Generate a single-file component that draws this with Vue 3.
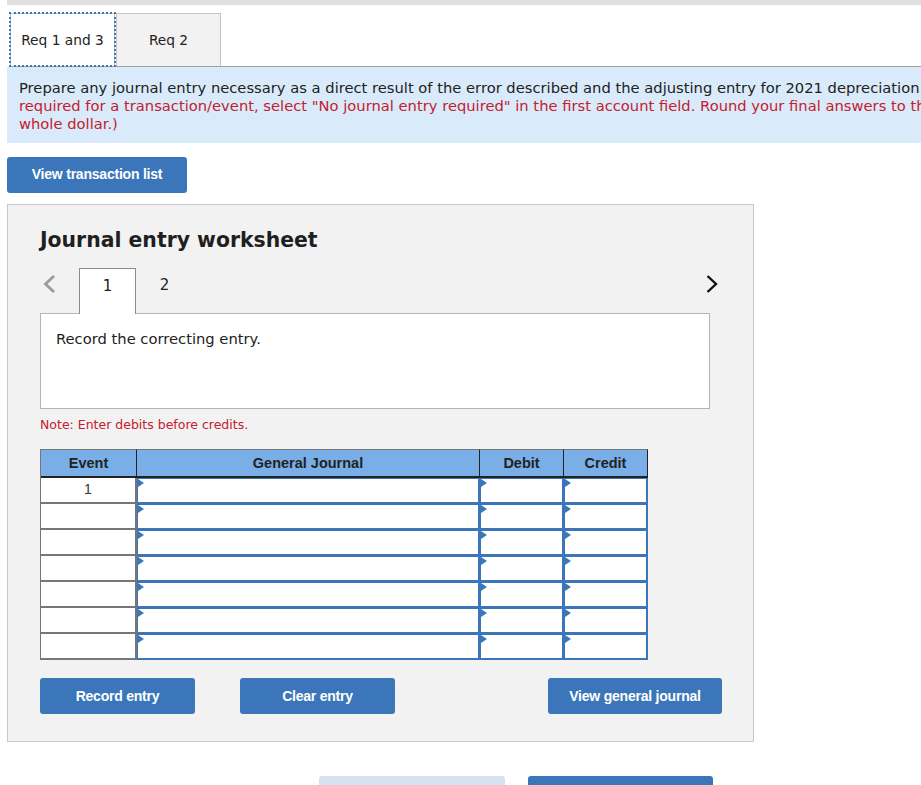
<script setup>
const rows = [1, 2, 3, 4, 5, 6, 7]
</script>

<template>
  <div class="page">
    <div class="topbar"></div>
    <div class="tabs">
      <button class="tab active">Req 1 and 3</button>
      <button class="tab">Req 2</button>
    </div>
    <div class="instructions">
      <div class="line">Prepare any journal entry necessary as a direct result of the error described and the adjusting entry for 2021 depreciation</div>
      <div class="line red">required for a transaction/event, select "No journal entry required" in the first account field. Round your final answers to the nearest</div>
      <div class="line red">whole dollar.)</div>
    </div>
    <button class="btn list-btn">View transaction list</button>

    <section class="panel">
      <h2 class="title">Journal entry worksheet</h2>
      <div class="pager">
        <svg class="chev" width="14" height="20" viewBox="0 0 14 20">
          <path d="M12 2 L3.5 10 L12 18" fill="none" stroke="#9a9a9a" stroke-width="2.8" />
        </svg>
        <div class="page-tab current">1</div>
        <div class="page-tab">2</div>
        <svg class="chev next" width="14" height="20" viewBox="0 0 14 20">
          <path d="M2.5 2 L11 10 L2.5 18" fill="none" stroke="#111" stroke-width="2.4" />
        </svg>
      </div>
      <div class="desc">Record the correcting entry.</div>
      <p class="note">Note: Enter debits before credits.</p>

      <div class="grid">
        <div class="head first">Event</div>
        <div class="head">General Journal</div>
        <div class="head">Debit</div>
        <div class="head">Credit</div>
        <template v-for="r in rows" :key="r">
          <div class="event">{{ r === 1 ? '1' : '' }}</div>
          <div class="cell"></div>
          <div class="cell"></div>
          <div class="cell"></div>
        </template>
      </div>

      <div class="actions">
        <button class="btn act">Record entry</button>
        <button class="btn act">Clear entry</button>
        <button class="btn act journal">View general journal</button>
      </div>
    </section>

    <div class="footer-nav">
      <button class="btn nav light"></button>
      <button class="btn nav dark"></button>
    </div>
  </div>
</template>

<style scoped>
.page {
  width: 921px;
  height: 785px;
  overflow: hidden;
  padding-left: 7px;
  box-sizing: border-box;
  background: #fff;
  font-family: "DejaVu Sans", Verdana, sans-serif;
  color: #222;
}
.topbar {
  height: 5px;
  width: 914px;
  background: #e0e0e0;
}
.tabs {
  display: flex;
  margin-top: 8px;
  margin-left: 3px;
  height: 53px;
  width: 911px;
  border-bottom: 1px solid #a0a0a0;
}
.tab {
  width: 105px;
  height: 53px;
  padding: 0;
  background: #f2f2f2;
  border: 1px solid #c4c4c4;
  border-bottom: 0;
  box-sizing: border-box;
  font: 13.75px "DejaVu Sans", Verdana, sans-serif;
  color: #222;
}
.active {
  background: #fff;
  outline: 2px dotted #3a76ba;
  outline-offset: -1px;
  margin-right: 1px;
}
.instructions {
  width: 914px;
  height: 76px;
  box-sizing: border-box;
  padding: 12px 0 0 12px;
  background: #d9ebfa;
  font-size: 14.73px;
  line-height: 18px;
  color: #222;
  overflow: hidden;
}
.line {
  white-space: nowrap;
}
.red {
  color: #c4202c;
}
.btn {
  border: 0;
  border-radius: 3px;
  background: #3b76ba;
  color: #fff;
  font: bold 14px "Liberation Sans", Arial, sans-serif;
  letter-spacing: -0.22px;
  padding: 0;
  display: block;
  flex-shrink: 0;
}
.list-btn {
  margin-top: 14px;
  width: 180px;
  height: 36px;
  padding-bottom: 2px;
}
.panel {
  margin-top: 11px;
  width: 747px;
  height: 538px;
  box-sizing: border-box;
  padding: 0 32px;
  background: #f2f2f2;
  border: 1px solid #c8c8c8;
}
.title {
  margin: 23px 0 0;
  font-size: 20.4px;
  font-weight: bold;
  line-height: 24px;
  color: #1f1f1f;
}
.pager {
  display: flex;
  align-items: flex-end;
  height: 46px;
  margin-top: 16px;
  position: relative;
  z-index: 1;
  margin-bottom: -1px;
}
.chev {
  align-self: flex-start;
  margin-top: 6px;
  margin-left: 2px;
  margin-right: 23px;
}
.next {
  margin-left: auto;
  margin-right: 2px;
}
.page-tab {
  width: 57px;
  height: 46px;
  box-sizing: border-box;
  text-align: center;
  padding-top: 8px;
  font-size: 15px;
  line-height: 18px;
  color: #222;
}
.current {
  background: #fff;
  border: 1px solid #8c8c8c;
  border-bottom: 0;
}
.desc {
  width: 670px;
  height: 96px;
  box-sizing: border-box;
  padding: 15px 15px 0;
  background: #fff;
  border: 1px solid #b4b4b4;
  font-size: 14.73px;
  line-height: 20px;
}
.note {
  margin: 8px 0 0;
  font-size: 12.5px;
  line-height: 15px;
  color: #c4202c;
}
.grid {
  display: grid;
  grid-template-columns: 96px 343px 84px 84px;
  grid-template-rows: 29px repeat(7, 26px);
  width: 608px;
  margin-top: 17px;
  border-left: 1px solid #777;
  box-sizing: border-box;
  font-family: "Liberation Sans", Arial, sans-serif;
}
.head {
  background: #79aee6;
  border-top: 1px solid #777;
  border-right: 1px solid #222;
  border-bottom: 2px solid #222;
  box-sizing: border-box;
  text-align: center;
  font-size: 14.5px;
  font-weight: bold;
  line-height: 26px;
  color: #222;
}
.event {
  background: #fff;
  border-right: 2px solid #777;
  border-bottom: 2px solid #777;
  text-align: center;
  font-size: 14px;
  line-height: 22px;
  color: #333;
  box-sizing: border-box;
}
.cell {
  position: relative;
  background: #fff;
  border: 2px solid #3b76ba;
  border-top-width: 1px;
  border-left-width: 1px;
  box-sizing: border-box;
}
.cell::before {
  content: "";
  position: absolute;
  left: 0;
  top: 0;
  border-left: 6px solid #3b76ba;
  border-top: 4px solid transparent;
  border-bottom: 4px solid transparent;
}
.actions {
  display: flex;
  margin-top: 18px;
  gap: 45px;
}
.act {
  width: 155px;
  height: 36px;
}
.journal {
  width: 174px;
  margin-left: 108px;
}
.footer-nav {
  display: flex;
  gap: 23px;
  margin: 34px 0 0 312px;
}
.nav {
  height: 36px;
}
.light {
  width: 186px;
  background: #d6e2f0;
}
.dark {
  width: 185px;
}
</style>
